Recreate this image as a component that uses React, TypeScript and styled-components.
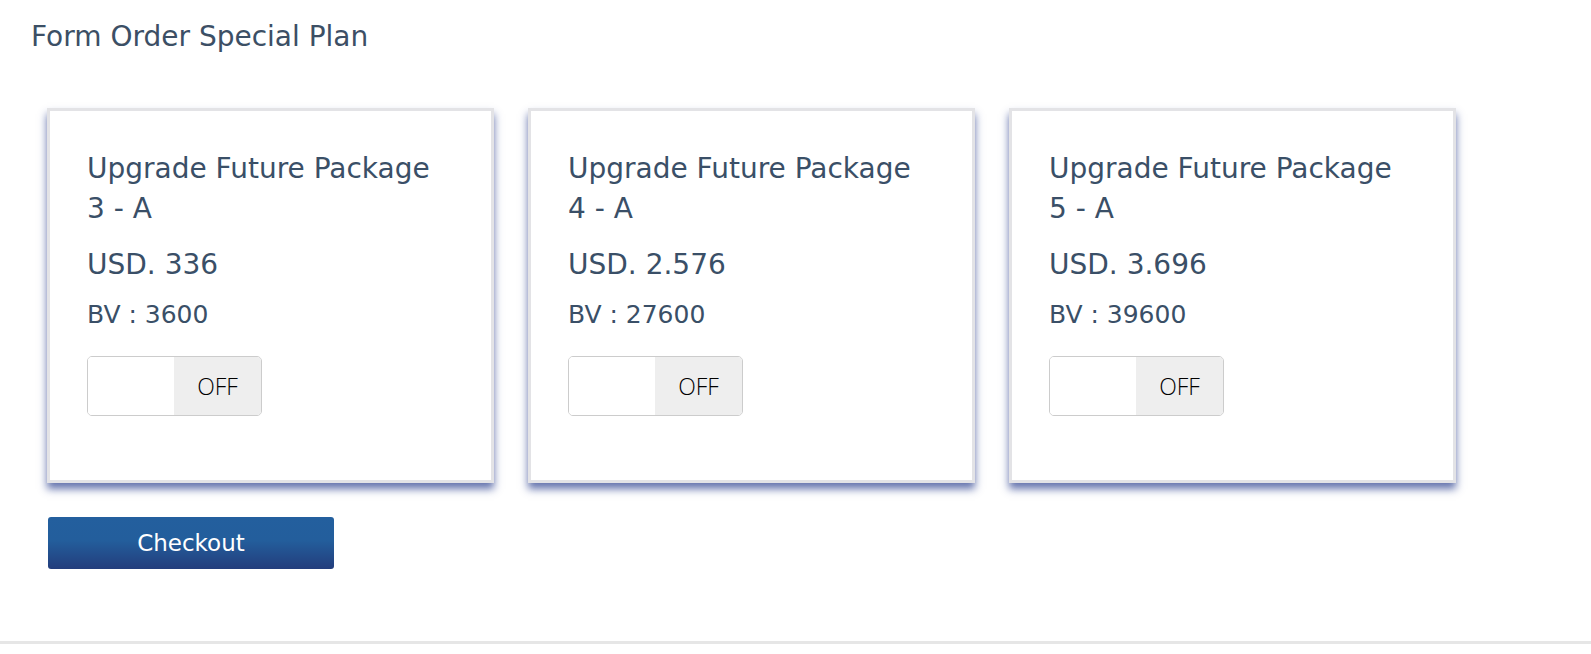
import React from "react";
import styled, { createGlobalStyle } from "styled-components";

const GlobalStyle = createGlobalStyle`
  html, body { margin: 0; padding: 0; background: #ffffff; }
  body { font-family: "DejaVu Sans", "Open Sans", sans-serif; }
  * { box-sizing: border-box; }
`;

const Page = styled.div`
  width: 100%;
  min-height: 654px;
  display: flex;
  flex-direction: column;
`;

const Content = styled.div`
  padding: 22px 0 0 31px;
  height: 641px;
  display: flex;
  flex-direction: column;
`;

const PageTitle = styled.h1`
  margin: 0;
  font-family: "DejaVu Sans", "Open Sans", sans-serif;
  font-size: 28px;
  line-height: 30px;
  font-weight: 400;
  color: #3c4f65;
`;

const CardRow = styled.div`
  display: flex;
  gap: 34px;
  margin: 56px 0 0 16px;
`;

const Card = styled.div`
  width: 447px;
  background: #fff;
  border: 3px solid #e3e3e6;
  padding: 38px 37px 64px 37px;
  box-shadow: 0 6px 8px rgba(30, 52, 135, 0.68);
  display: flex;
  flex-direction: column;
  align-items: flex-start;
`;

const CardHeading = styled.h3`
  margin: 0;
  max-width: 367px;
  font-family: "DejaVu Sans", "Open Sans", sans-serif;
  font-size: 28px;
  line-height: 40px;
  font-weight: 400;
  color: #3a4f67;
`;

const Price = styled.div`
  margin-top: 16px;
  font-size: 28px;
  line-height: 40px;
  font-weight: 400;
  color: #3a4f67;
`;

const Bv = styled.div`
  margin-top: 12px;
  font-size: 25px;
  line-height: 36px;
  font-weight: 400;
  color: #3a4f67;
`;

const Toggle = styled.button`
  margin-top: 23px;
  width: 175px;
  height: 60px;
  padding: 0;
  border: 1px solid #cccccc;
  border-radius: 5px;
  overflow: hidden;
  display: flex;
  background: #fff;
  cursor: pointer;
`;

const ToggleHandle = styled.span`
  flex: 0 0 86px;
  background: #ffffff;
`;

const ToggleLabel = styled.span`
  flex: 1;
  background: #eeeeee;
  display: flex;
  align-items: center;
  justify-content: center;
  font-family: "Open Sans", "Liberation Sans", sans-serif;
  font-weight: 300;
  font-size: 23px;
  color: #000000;
`;

const CheckoutButton = styled.button`
  margin: 34px 0 0 17px;
  width: 286px;
  height: 52px;
  border: none;
  border-radius: 3px;
  background: linear-gradient(to bottom, #235f9e 0%, #235e9c 45%, #233d7c 100%);
  color: #ffffff;
  font-family: "DejaVu Sans", "Open Sans", sans-serif;
  font-size: 23px;
  font-weight: 400;
  cursor: pointer;
`;

const Divider = styled.div`
  height: 3px;
  background: #e6e6e6;
  width: 100%;
`;

const packages = [
  { name: "Upgrade Future Package 3 - A", price: "USD. 336", bv: "BV : 3600" },
  { name: "Upgrade Future Package 4 - A", price: "USD. 2.576", bv: "BV : 27600" },
  { name: "Upgrade Future Package 5 - A", price: "USD. 3.696", bv: "BV : 39600" },
];

export default function App() {
  return (
    <Page>
      <GlobalStyle />
      <Content>
        <PageTitle>Form Order Special Plan</PageTitle>
        <CardRow>
          {packages.map((p) => (
            <Card key={p.name}>
              <CardHeading>{p.name}</CardHeading>
              <Price>{p.price}</Price>
              <Bv>{p.bv}</Bv>
              <Toggle type="button">
                <ToggleHandle />
                <ToggleLabel>OFF</ToggleLabel>
              </Toggle>
            </Card>
          ))}
        </CardRow>
        <CheckoutButton type="button">Checkout</CheckoutButton>
      </Content>
      <Divider />
    </Page>
  );
}
